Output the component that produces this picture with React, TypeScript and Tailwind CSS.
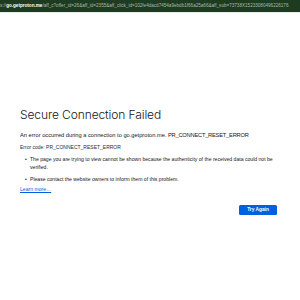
export default function App() {
  const font = { fontFamily: '"Liberation Sans", Arial, sans-serif' };
  const title = { fontFamily: 'Inter, "Liberation Sans", sans-serif' };
  return (
    <div className="w-[300px] h-[300px] bg-white overflow-hidden flex flex-col" style={font}>
      <div className="h-[13px] bg-[#1d3b20] border-b border-[#e8ece8] flex items-center whitespace-nowrap overflow-hidden text-[4.6px] leading-none">
        <span className="text-[#a9b9a9]">s://</span>
        <span className="text-white font-bold">go.getproton.me</span>
        <span className="text-[#a9b9a9]">/aff_c?offer_id=26&amp;aff_id=2355&amp;aff_click_id=102fe4dacd7454a9ebdb1f66a25a66&amp;aff_sub=73738X15233080496226176</span>
      </div>
      <div className="pl-[20px] pr-[22px] pt-[96px] text-[#15141a]">
        <h1 className="text-[12px] font-light leading-none tracking-[-0.1px]" style={title}>Secure Connection Failed</h1>
        <p className="mt-[11px] text-[5.7px] leading-[7px]">An error occurred during a connection to go.getproton.me. <span className="tracking-[-0.2px]">PR_CONNECT_RESET_ERROR</span></p>
        <p className="mt-[5px] text-[5px] leading-[7px] text-[#2b2a33]">Error code: PR_CONNECT_RESET_ERROR</p>
        <div className="mt-[4px] flex flex-col gap-[4px] text-[5.1px] leading-[8px]">
          <div className="flex">
            <span className="w-[10px] pl-[5px] shrink-0">•</span>
            <span>The page you are trying to view cannot be shown because the authenticity of the received data could not be verified.</span>
          </div>
          <div className="flex">
            <span className="w-[10px] pl-[5px] shrink-0">•</span>
            <span>Please contact the website owners to inform them of this problem.</span>
          </div>
        </div>
        <a className="block mt-[3px] text-[5.1px] leading-[7px] text-[#0061e0] underline">Learn more…</a>
        <div className="flex justify-end mt-[12px] pr-[1px]">
          <button className="w-[38px] h-[10px] bg-[#0061e0] text-white text-[4.8px] font-bold rounded-[1.5px] flex items-center justify-center">Try Again</button>
        </div>
      </div>
    </div>
  );
}
